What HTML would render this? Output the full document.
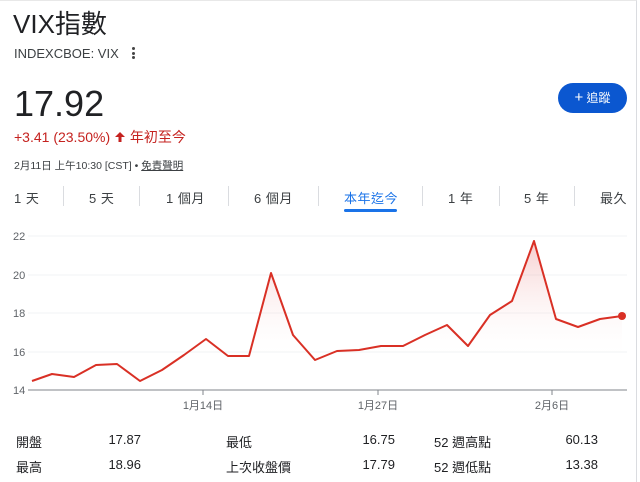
<!DOCTYPE html>
<html><head><meta charset="utf-8"><style>
*{margin:0;padding:0;box-sizing:border-box}
body{width:640px;height:482px;background:#fff;font-family:"Liberation Sans","Noto Sans CJK TC",sans-serif;color:#202124;position:relative;overflow:hidden}
.a{position:absolute;white-space:nowrap}
.frame{position:absolute;left:0;top:0;width:637px;height:482px;border-top:1px solid #e8e8e8;border-right:1px solid #dadce0}
.tab{position:absolute;top:188px;font-size:13px;color:#3c4043;letter-spacing:0.5px}
.div{position:absolute;top:186px;width:1px;height:20px;background:#dadce0}
.st{position:absolute;font-size:13px;color:#202124}
.r{text-align:right;width:60px}
</style></head><body>
<div class="frame"></div>
<div class="a" style="left:13px;top:9px;font-size:26px;line-height:30px;">VIX指數</div>
<div class="a" style="left:14px;top:46px;font-size:13px;color:#3c4043">INDEXCBOE: VIX</div>
<div class="a" style="left:132px;top:47px;width:3px;height:13px">
<div style="width:3px;height:3px;border-radius:50%;background:#444;margin-bottom:1.5px"></div>
<div style="width:3px;height:3px;border-radius:50%;background:#444;margin-bottom:1.5px"></div>
<div style="width:3px;height:3px;border-radius:50%;background:#444"></div></div>
<div class="a" style="left:14px;top:84px;font-size:36px;line-height:40px;">17.92</div>
<div class="a" style="left:14px;top:127px;font-size:14px;color:#c5221f">+3.41 (23.50%) <svg width="12" height="12" viewBox="0 0 12 12" style="vertical-align:-1px"><path d="M6 1 L11 6 H7.5 V11 H4.5 V6 H1 Z" fill="#c5221f"/></svg> 年初至今</div>
<div class="a" style="left:14px;top:158px;font-size:10.5px;color:#3c4043">2月11日 上午10:30 [CST] • <span style="text-decoration:underline">免責聲明</span></div>
<div class="a" style="left:558px;top:83px;width:69px;height:30px;border-radius:15px;background:#0b57d0;color:#fff;font-size:12px;line-height:30px;text-align:center"><span style="font-size:15px">+</span> 追蹤</div>

<div class="tab" style="left:14px">1 天</div>
<div class="tab" style="left:89px">5 天</div>
<div class="tab" style="left:166px">1 個月</div>
<div class="tab" style="left:254px">6 個月</div>
<div class="tab" style="left:344px;color:#1a73e8">本年迄今</div>
<div class="tab" style="left:448px">1 年</div>
<div class="tab" style="left:524px">5 年</div>
<div class="tab" style="left:600px">最久</div>
<div class="div" style="left:63px"></div><div class="div" style="left:139px"></div><div class="div" style="left:228px"></div><div class="div" style="left:318px"></div><div class="div" style="left:422px"></div><div class="div" style="left:499px"></div><div class="div" style="left:574px"></div>
<div class="a" style="left:344px;top:209px;width:53px;height:3px;border-radius:2px;background:#1a73e8"></div>

<svg class="a" style="left:0;top:220px" width="640" height="200" viewBox="0 220 640 200">
<defs><linearGradient id="g" x1="0" y1="0" x2="0" y2="1"><stop offset="0" stop-color="#e57373" stop-opacity="0.35"/><stop offset="0.8" stop-color="#fff" stop-opacity="0"/></linearGradient></defs>
<g stroke="#f1f3f4" stroke-width="1"><line x1="28" y1="236" x2="627" y2="236"/><line x1="28" y1="275" x2="627" y2="275"/><line x1="28" y1="313" x2="627" y2="313"/><line x1="28" y1="352" x2="627" y2="352"/></g>
<g font-size="11" fill="#5f6368" font-family="Liberation Sans,sans-serif"><text x="13" y="240">22</text><text x="13" y="279">20</text><text x="13" y="317">18</text><text x="13" y="356">16</text><text x="13" y="394">14</text></g>
<path d="M32,381 L52,374 L74,377 L96,365 L117,364 L140,381 L162,370 L184,355 L206,339 L228,356 L249,356 L271,273 L293,335 L315,360 L337,351 L359,350 L381,346 L403,346 L425,335 L447,325 L468,346 L490,315 L512,301 L534,241 L556,319 L578,327 L600,319 L622,316 L622,390 L32,390Z" fill="url(#g)"/>
<line x1="28" y1="390" x2="627" y2="390" stroke="#80868b" stroke-width="1"/>
<g stroke="#80868b"><line x1="203" y1="390" x2="203" y2="395"/><line x1="378" y1="390" x2="378" y2="395"/><line x1="552" y1="390" x2="552" y2="395"/></g>
<path d="M32,381 L52,374 L74,377 L96,365 L117,364 L140,381 L162,370 L184,355 L206,339 L228,356 L249,356 L271,273 L293,335 L315,360 L337,351 L359,350 L381,346 L403,346 L425,335 L447,325 L468,346 L490,315 L512,301 L534,241 L556,319 L578,327 L600,319 L622,316" fill="none" stroke="#d93025" stroke-width="2" stroke-linejoin="round"/>
<circle cx="622" cy="316" r="4" fill="#d93025"/>
<g font-size="11" fill="#5f6368" font-family="Liberation Sans,Noto Sans CJK TC,sans-serif" text-anchor="middle"><text x="203" y="409">1月14日</text><text x="378" y="409">1月27日</text><text x="552" y="409">2月6日</text></g>
</svg>

<div class="st" style="left:16px;top:432px">開盤</div><div class="st r" style="left:81px;top:432px">17.87</div>
<div class="st" style="left:226px;top:432px">最低</div><div class="st r" style="left:335px;top:432px">16.75</div>
<div class="st" style="left:434px;top:432px">52 週高點</div><div class="st r" style="left:538px;top:432px">60.13</div>
<div class="st" style="left:16px;top:457px">最高</div><div class="st r" style="left:81px;top:457px">18.96</div>
<div class="st" style="left:226px;top:457px">上次收盤價</div><div class="st r" style="left:335px;top:457px">17.79</div>
<div class="st" style="left:434px;top:457px">52 週低點</div><div class="st r" style="left:538px;top:457px">13.38</div>
</body></html>
